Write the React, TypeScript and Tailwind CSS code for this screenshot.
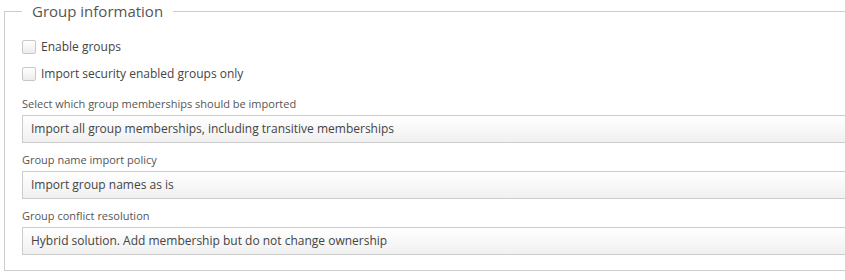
import { useState } from "react";

const selects = [
  {
    label: "Select which group memberships should be imported",
    options: [
      "Import all group memberships, including transitive memberships",
      "Import only direct group memberships",
    ],
  },
  {
    label: "Group name import policy",
    options: ["Import group names as is", "Prefix group names with domain"],
  },
  {
    label: "Group conflict resolution",
    options: [
      "Hybrid solution. Add membership but do not change ownership",
      "Take ownership of existing groups",
    ],
  },
];

function Checkbox({ label }: { label: string }) {
  const [checked, setChecked] = useState(false);
  return (
    <label className="flex h-[27px] items-center cursor-pointer">
      <input
        type="checkbox"
        checked={checked}
        onChange={() => setChecked(!checked)}
        className="appearance-none w-[14px] h-[14px] rounded-[2px] border border-[#c8c8c8] bg-gradient-to-b from-white to-[#ececec] checked:bg-[#4a90d9]"
      />
      <span className="ml-[5px] text-[12px] text-[#444]">{label}</span>
    </label>
  );
}

export default function App() {
  return (
    <div className="w-[845px] h-[280px] overflow-hidden bg-white font-['Open_Sans',sans-serif]">
      <fieldset className="ml-[4px] w-[870px] border border-[#cccccc] pl-[17px] pr-0 pb-[15px]">
        <legend className="px-[10px] text-[15px] leading-[22px] text-[#555]">Group information</legend>

        {/* Checkboxes */}
        <div className="pt-[11px]">
          <Checkbox label="Enable groups" />
          <Checkbox label="Import security enabled groups only" />
        </div>

        {/* Selects */}
        {selects.map((s, i) => (
          <div key={s.label} className={i === 0 ? "mt-[7px]" : "mt-[7px]"}>
            <div className="pt-[2px] text-[11px] leading-[16px] text-[#555] mb-[3px]">{s.label}</div>
            <select className="block w-full h-[28px] appearance-none border border-[#cccccc] bg-gradient-to-b from-white to-[#f0f0f0] pl-[8px] text-[12px] text-[#444] outline-none">
              {s.options.map((o) => (
                <option key={o}>{o}</option>
              ))}
            </select>
          </div>
        ))}
      </fieldset>
    </div>
  );
}
